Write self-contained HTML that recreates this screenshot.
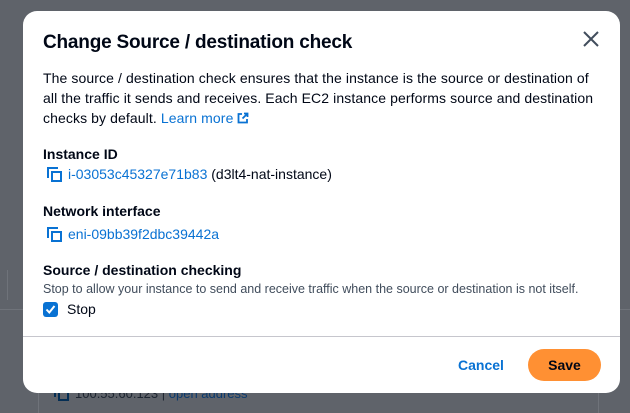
<!DOCTYPE html>
<html><head><style>
body{margin:0;width:630px;height:413px;background:#5f636a;font-family:"Liberation Sans",sans-serif;position:relative;overflow:hidden;color:#000716}
.bg{position:absolute}
.m{position:absolute;left:23px;top:11px;width:597px;height:382px;background:#fff;border-radius:14px}
.a{position:absolute;white-space:nowrap}
.lk{color:#0972d3}
.cp{display:inline-block;width:15px;height:15px;position:relative;vertical-align:-3px;margin-right:6px}
.cp:before{content:"";position:absolute;left:0;top:0;width:9px;height:9px;border-left:2px solid #0972d3;border-top:2px solid #0972d3}
.cp:after{content:"";position:absolute;left:4px;top:4px;width:7px;height:7px;border:2px solid #0972d3}
</style></head><body>
<div class="bg" style="left:0;top:309px;width:630px;height:1px;background:#6f737a"></div>
<div class="bg" style="left:7px;top:270px;width:1px;height:30px;background:#6f737a"></div>
<div class="bg" style="left:38px;top:393px;width:1px;height:20px;background:#6f737a"></div>
<div class="bg" style="left:598px;top:393px;width:1px;height:20px;background:#6f737a"></div>
<div class="a" style="left:54px;top:386px;font-size:13px;color:#1d2530"><span class="cp" style="filter:brightness(.4)"></span>100.55.60.123 | <span style="color:#0a3a6e">open address</span></div>
<div class="m">
<div class="a" style="left:20px;top:21px;font-size:19px;font-weight:bold;letter-spacing:-0.2px">Change Source / destination check</div>
<svg class="a" style="left:559px;top:19px" width="18" height="18" viewBox="0 0 18 18"><path d="M2 2L16 16M16 2L2 16" stroke="#414d5c" stroke-width="2"/></svg>
<div class="a" style="left:20px;top:57px;font-size:14px;line-height:20px;color:#000716;letter-spacing:0.1px">The source / destination check ensures that the instance is the source or destination of<br>all the traffic it sends and receives. Each EC2 instance performs source and destination<br>checks by default. <span class="lk">Learn more <svg width="12" height="12" viewBox="0 0 12 12" style="vertical-align:-1px"><path d="M5 2H1.5V10.5H10V7M7 1.5H10.5V5M10.5 1.5L5.5 6.5" fill="none" stroke="#0972d3" stroke-width="1.8"/></svg></span></div>
<div class="a" style="left:20px;top:135px;font-size:14px;font-weight:bold">Instance ID</div>
<div class="a" style="left:24px;top:155px;font-size:14px"><span class="cp"></span><span class="lk">i-03053c45327e71b83</span> (d3lt4-nat-instance)</div>
<div class="a" style="left:20px;top:192px;font-size:14px;font-weight:bold">Network interface</div>
<div class="a" style="left:24px;top:215px;font-size:14px"><span class="cp"></span><span class="lk">eni-09bb39f2dbc39442a</span></div>
<div class="a" style="left:20px;top:251px;font-size:14px;font-weight:bold">Source / destination checking</div>
<div class="a" style="left:20px;top:271px;font-size:12.5px;color:#414d5c">Stop to allow your instance to send and receive traffic when the source or destination is not itself.</div>
<div class="a" style="left:20px;top:291px;width:15px;height:15px;background:#0972d3;border-radius:3px"><svg width="15" height="15" viewBox="0 0 15 15"><path d="M3.5 7.5L6.3 10.5L11.5 4" fill="none" stroke="#fff" stroke-width="2"/></svg></div>
<div class="a" style="left:44px;top:290px;font-size:14px">Stop</div>
<div class="a" style="left:0;top:325px;width:597px;height:1px;background:#c6c6cd"></div>
<div class="a" style="left:435px;top:346px;font-size:14px;font-weight:bold;color:#0972d3">Cancel</div>
<div class="a" style="left:505px;top:338px;width:73px;height:32px;background:#ff9033;border-radius:16px;font-size:14px;font-weight:bold;text-align:center;line-height:32px">Save</div>
</div>
</body></html>
